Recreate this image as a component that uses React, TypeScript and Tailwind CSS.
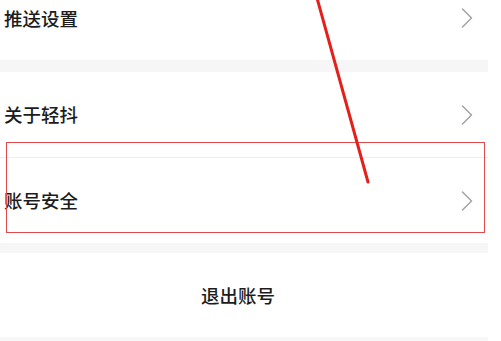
import React from "react";

const Chevron = () => (
  <svg width="12" height="20" viewBox="0 0 12 20" fill="none" className="shrink-0">
    <path d="M1.5 1 L10.5 10 L1.5 19" stroke="#a3a3a3" strokeWidth="1.5" strokeLinecap="round" strokeLinejoin="round" />
  </svg>
);

const Row = ({ label, h }: { label: string; h: string }) => (
  <div className={`flex items-center justify-between bg-white pl-[4px] pr-[15px] ${h}`}>
    <span className="text-[18.5px] font-medium leading-none text-[#1c1c1c]">{label}</span>
    <Chevron />
  </div>
);

export default function App() {
  return (
    <div
      className="relative w-[501px] h-[341px] overflow-hidden bg-white"
      style={{ fontFamily: '"Noto Sans CJK SC", "Noto Sans", sans-serif' }}
    >
      <div className="w-[488px] flex flex-col">
        <div className="flex items-start justify-between bg-white pl-[4px] pr-[15px] h-[60px] pt-[8px]">
          <span className="text-[18.5px] font-medium leading-[20px] text-[#1c1c1c]">推送设置</span>
          <Chevron />
        </div>
        <div className="h-[12px] bg-[#f6f6f6]" />
        <Row label="关于轻抖" h="h-[85px]" />
        <div className="h-px bg-[#eeeeee]" />
        <Row label="账号安全" h="h-[85px]" />
        <div className="h-[10px] bg-[#f6f6f6]" />
        <div className="h-[84px] bg-white flex items-center justify-center pr-[12px]">
          <span className="text-[18.5px] font-medium leading-none text-[#1c1c1c]">退出账号</span>
        </div>
        <div className="h-[10px] bg-[#f8f8f8]" />
      </div>

      <div className="absolute left-[6px] top-[142px] w-[479px] h-[91px] border-[1.5px] border-[#e04a4a]" />

      <svg className="absolute left-0 top-0" width="501" height="341" viewBox="0 0 501 341">
        <line x1="317" y1="-2" x2="368" y2="182" stroke="#e3201c" strokeWidth="3" strokeLinecap="round" />
      </svg>
    </div>
  );
}
